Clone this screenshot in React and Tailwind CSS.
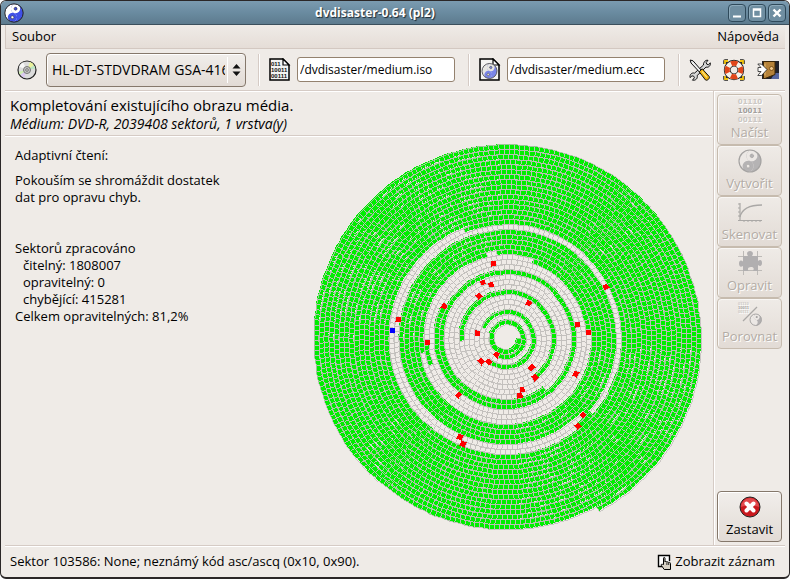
import React from "react";

const SEG = 5;
const START_RADIUS = 10;
const TURNS = 36.17;
const CENTER = 197;

/* Angular ranges are given in turns from the spiral's start. */
const GREEN_RANGES = [
  [0, 1.34],
  [2.56, 3.33],
  [6.485, 7.145],
  [10.15, 11.575],
  [13.445, 13.49],
  [13.8, 13.985],
  [14.475, 14.716],
  [14.728, 19.12],
  [20.118, 20.137],
  [20.69, 37],
];

const DEFECTS = [
  1.35, 3.34, 3.54, 4.38, 5.14, 5.83, 7.155, 7.66, 8.2, 8.71, 9.22, 9.69,
  11.58, 11.967, 12.36, 12.72, 13.08, 13.495, 13.99, 19.125, 19.32, 19.53,
  19.925, 20.142, 20.31,
];
const CURRENT = 20.51;

function buildSpiral() {
  const paths = { good: "", bad: "", head: "", grid: "" };
  let a = 0;
  const point = (r, angle) =>
    `${Math.round(CENTER + r * Math.cos(angle))} ${Math.round(CENTER + r * Math.sin(angle))}`;
  while (a < TURNS * 2 * Math.PI) {
    const inner = START_RADIUS + (SEG * a) / (2 * Math.PI);
    const next = a + 2 * Math.atan(SEG / (2 * inner));
    const innerNext = START_RADIUS + (SEG * next) / (2 * Math.PI);
    const d = `M${point(inner, a)}L${point(inner + SEG, a)}L${point(innerNext + SEG, next)}L${point(innerNext, next)}Z`;
    const t0 = a / (2 * Math.PI);
    const t1 = next / (2 * Math.PI);
    const mid = (t0 + t1) / 2;
    if (CURRENT >= t0 && CURRENT < t1) paths.head += d;
    else if (DEFECTS.some((t) => t >= t0 && t < t1)) paths.bad += d;
    else if (GREEN_RANGES.some(([s, e]) => mid >= s && mid < e)) paths.good += d;
    paths.grid += d;
    a = next;
  }
  return paths;
}

const spiral = buildSpiral();

function DiscSpiral() {
  return (
    <svg
      className="w-full max-w-[394px]"
      viewBox="0 0 394 394"
      role="img"
      aria-label="Adaptivní čtení"
      shapeRendering="crispEdges"
    >
      <path d={spiral.good} fill="#00ee00" />
      <path d={spiral.grid} fill="none" stroke="#c0bebc" strokeWidth=".8" transform="translate(.5 .5)" />
      <path d={spiral.bad} fill="#ff0000" transform="translate(.5 .5)" />
      <path d={spiral.head} fill="#0000ff" transform="translate(.5 .5)" />
    </svg>
  );
}

function YinYang({ className, light, dark, line }) {
  return (
    <svg className={className} viewBox="0 0 24 24" aria-hidden="true">
      <g transform="rotate(20 12 12)">
        <circle cx="12" cy="12" r="11" fill={dark} />
        <path d="M12 1a11 11 0 0 0 0 22 5.500 5.500 0 0 0 0-11 5.500 5.500 0 0 1 0-11z" fill={light} />
        <circle cx="12" cy="6.500" r="5.500" fill={light} />
        <circle cx="12" cy="17.500" r="5.500" fill={dark} />
        <circle cx="12" cy="6.500" r="1.800" fill={dark} stroke={line} strokeWidth=".6" />
        <circle cx="12" cy="17.500" r="1.800" fill={light} stroke={line} strokeWidth=".6" />
      </g>
      <circle cx="12" cy="12" r="11" fill="none" stroke={line} strokeWidth="1.200" />
    </svg>
  );
}

function DiscIcon() {
  return (
    <svg className="size-5 shrink-0" viewBox="0 0 20 20" aria-hidden="true">
      <circle cx="10" cy="10" r="9" fill="#dcdcdc" stroke="#222" strokeWidth="1.200" />
      <path d="M10 10 2 6.500A9 9 0 0 1 6 2.200z" fill="#f7f7f7" />
      <path d="M10 10 13 2a9 9 0 0 1 4 3.200z" fill="#e9f29c" />
      <path d="M10 10 17 5.500a8.500 8.500 0 0 1 1.300 3z" fill="#b9e6c2" />
      <path d="M10 10 3 14.800a8.500 8.500 0 0 1-1.300-3z" fill="#cdeeb0" />
      <path d="M10 10 7 17.800a9 9 0 0 1-3.500-3z" fill="#d9c8ee" />
      <circle cx="10" cy="10" r="3.500" fill="#c4c4c4" stroke="#777" />
      <circle cx="10" cy="10" r="1.300" fill="#eee" stroke="#555" strokeWidth=".8" />
    </svg>
  );
}

function PageShape() {
  return (
    <>
      <path d="M1 1h13l6 6v15H1z" fill="#f4f4f2" stroke="#000" strokeWidth="1.500" />
      <path d="M14 1v6h6z" fill="#fff" stroke="#000" strokeWidth="1.200" />
    </>
  );
}

function ImageFileIcon() {
  return (
    <svg className="h-6 w-[22px] shrink-0" viewBox="0 0 22 24" aria-hidden="true">
      <PageShape />
      <g fontFamily="Liberation Sans" fontWeight="700" fontSize="6" fill="#111">
        <text x="2" y="8">011</text>
        <text x="2" y="14">10011</text>
        <text x="2" y="20">00111</text>
      </g>
    </svg>
  );
}

function EccFileIcon() {
  return (
    <svg className="h-6 w-[22px] shrink-0" viewBox="0 0 22 24" aria-hidden="true">
      <PageShape />
      <g transform="rotate(20 10.500 13)">
        <circle cx="10.500" cy="13" r="7.500" fill="#7a86e8" />
        <path d="M10.500 5.500a7.500 7.500 0 0 0 0 15 3.750 3.750 0 0 0 0-7.500 3.750 3.750 0 0 1 0-7.500z" fill="#e6e6e2" />
        <circle cx="10.500" cy="9.250" r="3.750" fill="#e6e6e2" />
        <circle cx="10.500" cy="16.750" r="3.750" fill="#7a86e8" />
        <circle cx="10.500" cy="9.250" r="1.200" fill="#7a86e8" stroke="#444" strokeWidth=".5" />
        <circle cx="10.500" cy="16.750" r="1.200" fill="#e6e6e2" stroke="#444" strokeWidth=".5" />
        <circle cx="10.500" cy="13" r="7.500" fill="none" stroke="#555" strokeWidth=".8" />
      </g>
    </svg>
  );
}

function ToolsIcon() {
  return (
    <svg className="size-[22px]" viewBox="0 0 22 22" aria-hidden="true">
      <path d="M15 3.500c.8-1.800 2.400-2.500 4-2.200l-1.800 2.200.6 1.700 1.700.6 1.800-2c.6 2.900-1.700 5-4.300 4.300L8.200 16.500c.7 2.800-1.500 5.300-4.700 4.700l1.900-2.500-.7-1.500-1.700-.4-2 1.800c-.5-3.200 1.800-5.200 4.600-4.500L14.500 6c-.2-.9 0-1.800.5-2.500z" fill="#d7d7d7" stroke="#111" />
      <path d="M1.200 1 4 1.800l8.500 9.700-1.800 1.800L2 4z" fill="#eee" stroke="#111" />
      <path d="m10.200 12.800 3-3 7 7.700c1 1.800-1.800 4.500-3.700 3.500z" fill="#eeb112" stroke="#111" />
      <path d="m13 12.500 5 5.800" stroke="#ffe27a" strokeWidth="1.200" />
    </svg>
  );
}

function LifeRingIcon() {
  return (
    <svg className="size-[22px]" viewBox="0 0 22 22" aria-hidden="true">
      <path d="M2 5V2h3M17 2h3v3M20 17v3h-3M5 20H2v-3" fill="none" stroke="#222" strokeWidth="3.500" strokeLinejoin="round" />
      <path d="M2 5V2h3M17 2h3v3M20 17v3h-3M5 20H2v-3" fill="none" stroke="#f1c40f" strokeWidth="1.800" />
      <circle cx="11" cy="11" r="6.800" fill="none" stroke="#222" strokeWidth="6.800" />
      <circle cx="11" cy="11" r="6.800" fill="none" stroke="#f4f1ea" strokeWidth="5" />
      <circle cx="11" cy="11" r="6.800" fill="none" stroke="#e0451a" strokeWidth="5" strokeDasharray="6.200 4.480" strokeDashoffset="3.100" />
    </svg>
  );
}

function ExitIcon() {
  return (
    <svg className="size-[22px]" viewBox="0 0 22 22" aria-hidden="true">
      <path d="M5 2h17v18H5z" fill="#22232b" />
      <path d="M18 14h4v6h-8z" fill="#5566a0" />
      <path d="M6.500 2.500H18v13L8 19.500H6.500z" fill="#b58239" stroke="#3a2608" />
      <path d="M8 4.500v12" stroke="#e2b873" />
      <circle cx="14.500" cy="9.500" r="2" fill="#f3c98b" stroke="#6a4210" strokeWidth=".8" />
      <path d="M.8 5h3.700L10 10.500l-5.500 6H.8L4 12.500H1v-4h3z" fill="#fff" stroke="#222" strokeWidth=".8" />
    </svg>
  );
}

function BitsIcon() {
  return (
    <svg className="size-6 overflow-visible" viewBox="0 0 24 24" aria-hidden="true">
      <g fontFamily="DejaVu Sans" fontWeight="700" fontSize="7" textAnchor="middle">
        <text x="12" y="6" fill="#cbc8c4">01110</text>
        <text x="12" y="15" fill="#a3a09d">10011</text>
        <text x="12" y="24" fill="#cbc8c4">00111</text>
      </g>
    </svg>
  );
}

function CurveIcon() {
  return (
    <svg className="size-6" viewBox="0 0 24 24" fill="none" stroke="#aaa8a6" aria-hidden="true">
      <path d="M2 3v18M0 20.500h24" strokeWidth="1.200" />
      <path d="M0 4h2M0 8h2M0 12h2M0 16h2M6 20v2M10 20v2M14 20v2M18 20v2M22 20v2" />
      <path d="M2 17C4 8 12 5 24 5" strokeWidth="1.300" />
    </svg>
  );
}

function PuzzleIcon() {
  return (
    <svg className="size-6" viewBox="0 0 24 24" aria-hidden="true">
      <path d="M0 5.500h24M0 19.500h24M5.500 0v24M19.500 0v24" stroke="#bdbab7" />
      <path d="M5 5h5c-2-3-.5-5 2-5s4 2 2 5h6v5c2.500-2 4-.5 4 2s-1.500 4-4 2v6h-5c1.500-3 .5-4-2-4s-4 1.500-2.500 4H5v-5c-2.500 1.500-4 .5-4-2.500s2-4 4-2z" fill="#b1afb0" />
    </svg>
  );
}

function CompareIcon() {
  return (
    <svg className="size-6 overflow-visible" viewBox="0 0 24 24" aria-hidden="true">
      <g fontFamily="Liberation Sans" fontWeight="700" fontSize="4">
        <text x="0" y="3" fill="#cbc8c4">01110</text>
        <text x="0" y="7" fill="#a3a09d">10011</text>
        <text x="0" y="11" fill="#cbc8c4">00111</text>
      </g>
      <path d="M19 5 5 19" stroke="#aaa8a6" strokeWidth="1.300" />
      <g transform="translate(11.500 11.500) scale(.52)">
        <g transform="rotate(20 12 12)">
          <circle cx="12" cy="12" r="11" fill="#b1afb0" />
          <path d="M12 1a11 11 0 0 0 0 22 5.500 5.500 0 0 0 0-11 5.500 5.500 0 0 1 0-11z" fill="#ece8e5" />
          <circle cx="12" cy="6.500" r="5.500" fill="#ece8e5" />
          <circle cx="12" cy="6.500" r="2" fill="#a5a3a2" />
          <circle cx="12" cy="17.500" r="2" fill="#ece8e5" />
        </g>
        <circle cx="12" cy="12" r="11" fill="none" stroke="#a5a3a2" strokeWidth="1.800" />
      </g>
    </svg>
  );
}

function StopIcon() {
  return (
    <svg className="size-6" viewBox="0 0 24 24" aria-hidden="true">
      <circle cx="12" cy="12" r="10" fill="#c9191e" stroke="#222" />
      <path d="M3 12a9 9 0 0 1 18 0c-5-2-13-2-18 0z" fill="#e2494d" />
      <path d="m8.500 8.500 7 7m0-7-7 7" stroke="#fff" strokeWidth="4" strokeLinecap="round" />
    </svg>
  );
}

function LogIcon() {
  return (
    <svg className="size-4 shrink-0" viewBox="0 0 16 16" aria-hidden="true">
      <path d="M5 12.500H1.500v-11h11V7" fill="#fff" stroke="#000" strokeWidth="1.400" />
      <path d="M6.500 10.500V4.200c0-1 1.500-1 1.500 0V8c.2-.8 1.700-.8 1.900.2.300-.6 1.600-.5 1.800.4.500-.5 1.800-.2 1.800.9v6H7.200L4.300 11.300c-.4-1 .7-1.600 1.300-.9z" fill="#d8d2c6" stroke="#000" />
      <path d="M9.900 8.500V11M11.700 9v2" stroke="#000" strokeWidth=".8" />
    </svg>
  );
}

function TitleButton({ label, children }) {
  return (
    <button
      type="button"
      aria-label={label}
      className="flex size-[18px] items-center justify-center rounded border border-[#2f4a5b] bg-[#6f8ea1] shadow-[inset_1px_1px_0_#8daabb]"
    >
      <svg className="size-3" viewBox="0 0 12 12" fill="none" stroke="#fff" aria-hidden="true">
        {children}
      </svg>
    </button>
  );
}

function Action({ label, disabled, children }) {
  return (
    <button
      type="button"
      disabled={disabled}
      className={
        disabled
          ? "flex h-[51px] w-full flex-col items-center justify-center rounded-sm border border-[#c6bbae] bg-linear-to-b from-[#efebe7] to-[#e2dbd5] text-[#b3aca5] shadow-[inset_1px_1px_0_#f8f6f4] [text-shadow:1px_1px_0_#fff]"
          : "flex h-[51px] w-full flex-col items-center justify-center rounded-sm border border-[#85786b] bg-linear-to-b from-[#f1eeeb] to-[#e2dbd5] shadow-[inset_1px_1px_0_#fff]"
      }
    >
      {children}
      <span className="leading-5">{label}</span>
    </button>
  );
}

function ToolSeparator() {
  return <div className="h-8 w-[2px] border-r border-white bg-[#d5cbc5]" />;
}

const fieldClass =
  "h-[25px] w-[158px] rounded-[3px] border border-[#94826f] bg-white px-[2px] text-[12px] outline-none";

export default function App() {
  return (
    <div className="flex min-h-screen flex-col overflow-hidden rounded-md border border-b-2 border-[#2b2727] bg-[#efebe7] font-['Open_Sans','Noto_Sans',sans-serif] text-[13px] leading-[17px] text-black">
      <header className="flex h-6 items-center border-b border-[#3b4f5c] bg-linear-to-b from-[#7b9bb0] via-[#6a8ba0] to-[#5d7b8e] px-[3px]">
        <div className="flex-1">
          <YinYang className="size-5" light="#fff" dark="#3f50e6" line="#222" />
        </div>
        <h1 className="pr-10 text-[12px] font-bold text-white [text-shadow:1px_1px_1px_#1d2b35]">
          dvdisaster-0.64 (pl2)
        </h1>
        <div className="flex flex-1 justify-end gap-[2px]">
          <TitleButton label="Minimalizovat">
            <path d="M2 9.500h8" strokeWidth="2" />
          </TitleButton>
          <TitleButton label="Maximalizovat">
            <path d="M2.500 2h7v7.500h-7zM2 3h8" strokeWidth="1.500" />
          </TitleButton>
          <TitleButton label="Zavřít">
            <path d="m2.500 2.500 7 7m0-7-7 7" strokeWidth="2.400" />
          </TitleButton>
        </div>
      </header>

      <div className="flex flex-1 flex-col px-1">
        <nav className="flex h-6 items-center justify-between border-b border-l border-[#d3c8c1] bg-linear-to-b from-[#efebe7] to-[#e5ddd7] px-[6px]">
          <button type="button">Soubor</button>
          <button type="button">Nápověda</button>
        </nav>

        <div className="flex h-[42px] items-center border-b border-[#d5cbc5] pr-[6px] pl-3 shadow-[0_1px_0_#fff]">
          <DiscIcon />
          <div className="relative ml-[9px]">
            <select
              aria-label="Mechanika"
              className="h-[34px] w-[200px] appearance-none overflow-hidden rounded border border-[#85786b] bg-linear-to-b from-[#f1eeeb] to-[#e2dbd5] pr-5 pl-[5px] text-[14px] shadow-[inset_1px_1px_0_#fff]"
            >
              <option>HL-DT-STDVDRAM GSA-4163B</option>
            </select>
            <svg
              className="pointer-events-none absolute top-1 right-[5px] h-[26px] w-[14px]"
              viewBox="0 0 14 26"
              aria-hidden="true"
            >
              <path d="M.5 0v26" stroke="#fff" />
              <path d="M9.500 7 13.500 11.500h-8zM9.500 19l4-4.500h-8z" fill="#111" />
            </svg>
          </div>
          <div className="ml-3">
            <ToolSeparator />
          </div>
          <div className="ml-[9px] flex items-center gap-[6px]">
            <ImageFileIcon />
            <input aria-label="Soubor obrazu" defaultValue="/dvdisaster/medium.iso" className={fieldClass} />
          </div>
          <div className="ml-[13px]">
            <ToolSeparator />
          </div>
          <div className="ml-[9px] flex items-center gap-[6px]">
            <EccFileIcon />
            <input aria-label="Soubor ECC" defaultValue="/dvdisaster/medium.ecc" className={fieldClass} />
          </div>
          <div className="ml-[13px]">
            <ToolSeparator />
          </div>
          <div className="ml-auto flex items-center gap-3">
            <button type="button" aria-label="Nastavení"><ToolsIcon /></button>
            <button type="button" aria-label="Pomoc"><LifeRingIcon /></button>
            <button type="button" aria-label="Konec"><ExitIcon /></button>
          </div>
        </div>

        <div className="flex flex-1">
          <main className="flex flex-1 flex-col">
            <div className="flex h-[45px] flex-col justify-center border-b border-[#d5cbc5] px-[5px] shadow-[0_1px_0_#fff]">
              <h2 className="text-[15px] leading-5">Kompletování existujícího obrazu média.</h2>
              <p className="text-[14px] leading-[17px] italic">Médium: DVD-R, 2039408 sektorů, 1 vrstva(y)</p>
            </div>
            <div className="flex flex-1">
              <section className="flex-1 pt-[11px] pl-[10px]">
                <p>Adaptivní čtení:</p>
                <p className="mt-2">
                  Pokouším se shromáždit dostatek
                  <br />
                  dat pro opravu chyb.
                </p>
                <p className="mt-[34px]">Sektorů zpracováno</p>
                <p className="pl-2">čitelný: 1808007</p>
                <p className="pl-2">opravitelný: 0</p>
                <p className="pl-2">chybějící: 415281</p>
                <p>Celkem opravitelných: 81,2%</p>
              </section>
              <div className="flex w-[403px] items-start pt-[5px]">
                <DiscSpiral />
              </div>
            </div>
          </main>

          <aside className="ml-px flex w-[72px] flex-col border-l border-[#d5cbc5] px-[3px] pt-[3px] pb-[3px] shadow-[inset_1px_0_0_#fff]">
            <Action label="Načíst" disabled><BitsIcon /></Action>
            <Action label="Vytvořit" disabled>
              <YinYang className="size-6" light="#ece8e5" dark="#b5b3b4" line="#a5a3a2" />
            </Action>
            <Action label="Skenovat" disabled><CurveIcon /></Action>
            <Action label="Opravit" disabled><PuzzleIcon /></Action>
            <Action label="Porovnat" disabled><CompareIcon /></Action>
            <div className="mt-auto">
              <Action label="Zastavit"><StopIcon /></Action>
            </div>
          </aside>
        </div>

        <footer className="flex h-8 items-center justify-between border-t border-[#d5cbc5] pr-[10px] pl-[5px] shadow-[inset_0_1px_0_#fff]">
          <p>Sektor 103586: None; neznámý kód asc/ascq (0x10, 0x90).</p>
          <button type="button" className="flex items-center gap-[2px]">
            <LogIcon />
            Zobrazit záznam
          </button>
        </footer>
      </div>
    </div>
  );
}
